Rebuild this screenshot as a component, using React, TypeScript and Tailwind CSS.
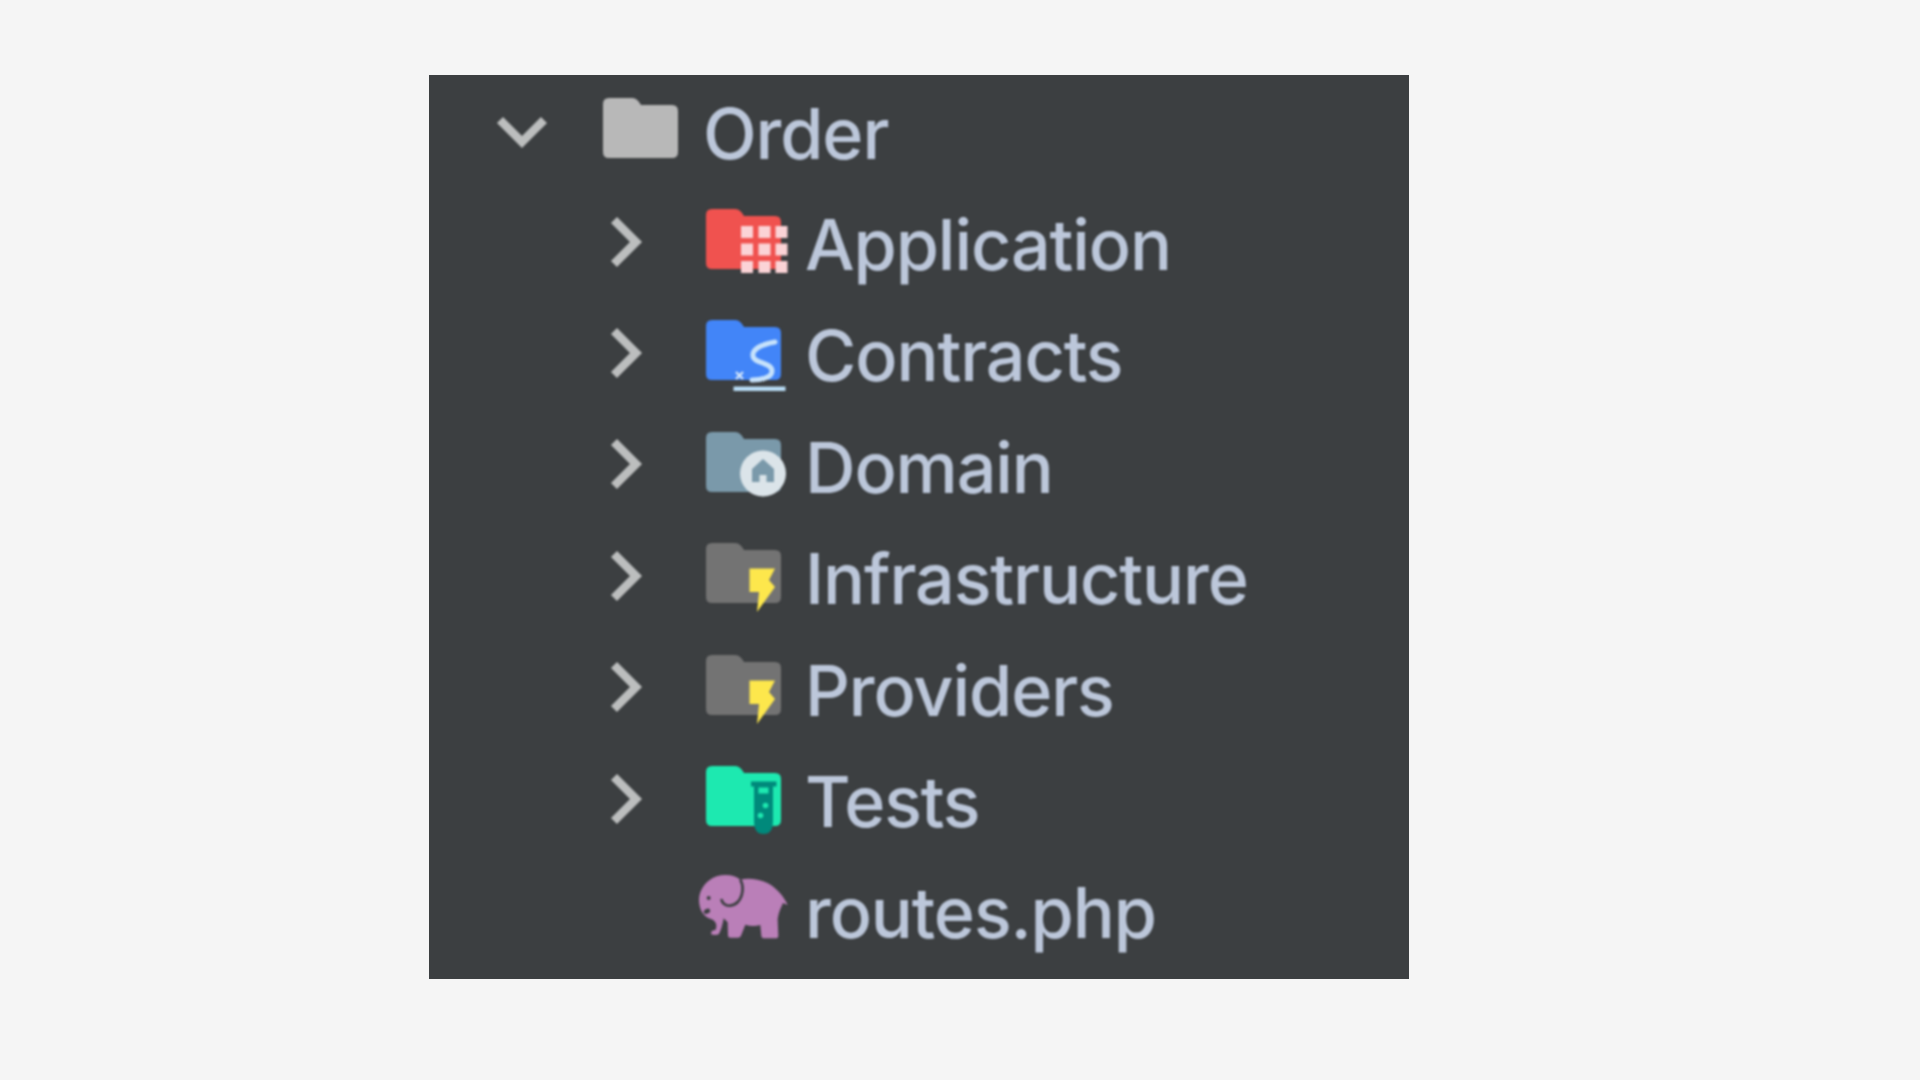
import React from "react";

const FOLDER = "M6 0H29Q33 0 36 4L38 7H69Q75 7 75 13V54Q75 60 69 60H6Q0 60 0 54V6Q0 0 6 0Z";

function IconBox({ children }: { children: React.ReactNode }) {
  return (
    <svg width="100" height="84" viewBox="-12 -12 100 84" className="-ml-[12px] shrink-0 overflow-visible">
      {children}
    </svg>
  );
}

function Chevron({ down }: { down?: boolean }) {
  return down ? (
    <svg width="50" height="30" viewBox="0 0 50 30" className="mt-[8px] overflow-visible">
      <path d="M3 3L25 25L47 3" fill="none" stroke="#bcbebe" strokeWidth="8.5" />
    </svg>
  ) : (
    <svg width="30" height="50" viewBox="0 0 30 50" className="mt-[5px] overflow-visible">
      <path d="M4 3L26 25L4 47" fill="none" stroke="#bcbebe" strokeWidth="8.5" />
    </svg>
  );
}

function Order() {
  return (
    <IconBox>
      <path d={FOLDER} fill="#b8b8b8" />
    </IconBox>
  );
}

function Application() {
  const xs = [35, 52.5, 69.5];
  const ys = [17, 34.5, 52];
  return (
    <IconBox>
      <path d={FOLDER} fill="#f0524f" />
      {ys.map((y) => xs.map((x) => <rect key={`${x}-${y}`} x={x} y={y} width="12" height="12" fill="#fbd3d6" />))}
    </IconBox>
  );
}

function Contracts() {
  return (
    <IconBox>
      <path d={FOLDER} fill="#4285f8" />
      <path d="M69 22C58 24 46 28 47 36C48 44 66 42 66 51C66 58 54 60 46 60" fill="none" stroke="#c6e2fb" strokeWidth="5" strokeLinecap="round" />
      <path d="M30 52L37 59M37 52L30 59" stroke="#d8e9fa" strokeWidth="2.2" />
      <rect x="27.5" y="66.5" width="52" height="4.5" fill="#b9ddf6" />
    </IconBox>
  );
}

function Domain() {
  return (
    <IconBox>
      <path d={FOLDER} fill="#7a99aa" />
      <circle cx="57" cy="41.5" r="23" fill="#dbe4e9" />
      <path d="M57 27L68 37V50H60.5V43H53.5V50H46V37Z" fill="#7a99aa" />
    </IconBox>
  );
}

function Bolt() {
  return (
    <IconBox>
      <path d={FOLDER} fill="#737373" />
      <path d="M43.5 25.5H69L63 37L69 44L51 69L53 49H43.5Z" fill="#fde74c" />
    </IconBox>
  );
}

function Tests() {
  return (
    <IconBox>
      <path d={FOLDER} fill="#1de9b0" />
      <rect x="45" y="15.5" width="25.5" height="5" fill="#00897b" />
      <path d="M48 20H67V55Q67 68 57.5 68Q48 68 48 55Z" fill="#00897b" />
      <rect x="52.5" y="21.5" width="10" height="6" fill="#1de9b0" />
      <circle cx="59.5" cy="39.5" r="2.8" fill="#1de9b0" />
      <circle cx="54.5" cy="49.5" r="2.8" fill="#1de9b0" />
    </IconBox>
  );
}

function Elephant() {
  return (
    <IconBox>
      <g transform="translate(-15.67,-128) scale(0.3333)">
        <path
          d="M105 378C125 378 140 384 150 392C175 386 215 390 245 410C268 428 282 445 292 468L278 462C272 475 265 490 262 510L264 560Q264 568 255 568L222 568Q214 568 213 560L210 528C195 532 180 532 165 527L152 560Q150 566 142 566L120 566Q113 566 113 558L112 520L100 508C97 525 92 545 85 556Q75 560 62 556L64 546L76 542C82 525 75 515 62 510C45 505 32 490 28 470C22 445 30 415 55 395C70 383 88 378 105 378Z"
          fill="#ba7fb8"
        />
        <path d="M150 392C165 420 155 465 120 470C105 472 95 462 93 450" fill="none" stroke="#3c3f41" strokeWidth="8" />
        <circle cx="55" cy="447" r="6" fill="#3c3f41" />
        <ellipse cx="50" cy="487" rx="10" ry="7" transform="rotate(-30 50 487)" fill="#3c3f41" />
      </g>
    </IconBox>
  );
}

const rows = [
  { label: "Application", Icon: Application, chevron: true },
  { label: "Contracts", Icon: Contracts, chevron: true },
  { label: "Domain", Icon: Domain, chevron: true },
  { label: "Infrastructure", Icon: Bolt, chevron: true },
  { label: "Providers", Icon: Bolt, chevron: true },
  { label: "Tests", Icon: Tests, chevron: true },
  { label: "routes.php", Icon: Elephant, chevron: false },
];

const labelClass = "text-[70px] font-medium leading-[84px] text-[#bcc7da] whitespace-nowrap tracking-[-1.1px] mt-[12px]";

export default function App() {
  return (
    <div className="h-screen overflow-hidden bg-[#f5f5f5] pt-[75px] pl-[429px] font-['Inter','Liberation_Sans',sans-serif]">
      <div className="h-[904px] w-[980px] overflow-hidden bg-[#3c3f41]">
        <div className="-mt-[3px] blur-[0.9px]">
          <div className="flex h-[111.4px] items-center pl-[68px]">
            <div className="w-[106px] shrink-0">
              <Chevron down />
            </div>
            <div className="w-[100px] shrink-0">
              <Order />
            </div>
            <span className={labelClass}>Order</span>
          </div>
          {rows.map(({ label, Icon, chevron }) => (
            <div key={label} className="flex h-[111.4px] items-center pl-[181px]">
              <div className="w-[96px] shrink-0">{chevron && <Chevron />}</div>
              <div className="w-[99px] shrink-0">
                <Icon />
              </div>
              <span className={labelClass}>{label}</span>
            </div>
          ))}
        </div>
      </div>
    </div>
  );
}
